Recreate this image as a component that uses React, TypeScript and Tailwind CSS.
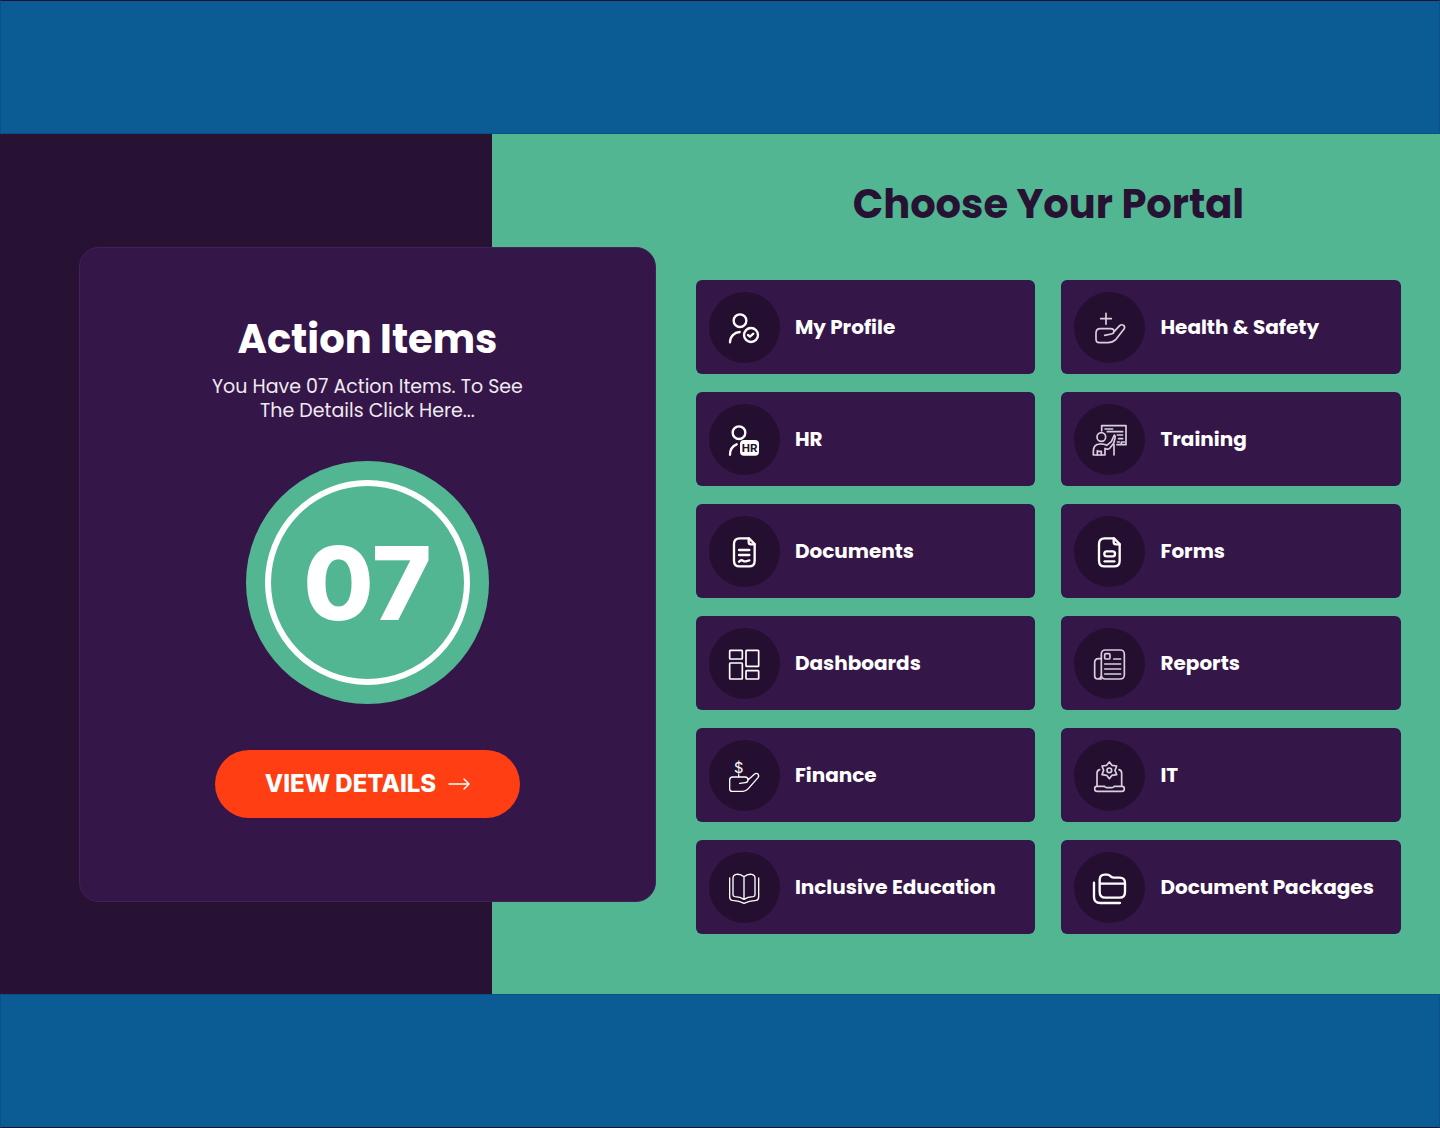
import React from 'react';
import { clsx } from 'clsx';

/**
 * Props shared by every line icon. The icons are drawn on a 105 unit grid.
 */
interface LineIconProps {
  readonly weight: number;
  readonly muted?: boolean;
  readonly children: React.ReactNode;
}

interface Portal {
  readonly label: string;
  readonly icon: React.ReactNode;
}

function LineIcon({ weight, muted = false, children }: LineIconProps) {
  return (
    <svg
      viewBox="0 0 105 105"
      className={clsx('size-[35px]', muted ? 'text-[#d9cfde]' : 'text-white')}
      fill="none"
      stroke="currentColor"
      strokeWidth={weight}
      strokeLinecap="round"
      strokeLinejoin="round"
      aria-hidden="true"
    >
      {children}
    </svg>
  );
}

const sheetOutline = (
  <>
    <path d="M66 13H38Q21 13 21 30V80Q21 97 38 97H66Q83 97 83 80V30Z" />
    <path d="M65 13V24Q65 31 72 31H83" />
  </>
);

const PORTALS: readonly Portal[] = [
  {
    label: 'My Profile',
    icon: (
      <LineIcon weight={7}>
        <circle cx="39" cy="32" r="19" />
        <path d="M9 97C9 80 22 67 38 66" />
        <circle cx="72" cy="75" r="21" />
        <path d="M63 75L69 80L79 71" />
      </LineIcon>
    ),
  },
  {
    label: 'Health & Safety',
    icon: (
      <LineIcon weight={5} muted>
        <path d="M42 10V43M26 26H58" />
        <path d="M67 64L83 47Q89 42 95 46Q100 51 96 57L72 88Q61 98 48 98H22Q12 98 12 88V69Q12 56 25 56H56Q66 56 66 64Q66 71 58 72L38 76" />
      </LineIcon>
    ),
  },
  {
    label: 'HR',
    icon: (
      <LineIcon weight={7}>
        <circle cx="36" cy="32" r="19" />
        <path d="M9 98C9 83 17 72 29 67" />
        <rect x="39" y="54" width="57" height="47" rx="12" fill="currentColor" stroke="none" />
        <text
          x="68"
          y="90"
          textAnchor="middle"
          className="fill-[#250f31] font-['Roboto',sans-serif] font-bold"
          fontSize="35"
          stroke="none"
        >
          HR
        </text>
      </LineIcon>
    ),
  },
  {
    label: 'Training',
    icon: (
      <LineIcon weight={5} muted>
        <path d="M29 27V11H102V68H75" />
        <path d="M39 21H62M46 29H92M76 39H92M80 50H92M76 60H82M88 67V60H97" />
        <circle cx="28" cy="45" r="13" />
        <path d="M4 99V88Q4 66 24 66Q38 66 44 70L58 59L67 39Q71 42 69 49L65 64L53 79Q46 84 39 79V99Z" />
        <path d="M16 99V86M28 99V88M18 88H26M66 67V99" />
      </LineIcon>
    ),
  },
  {
    label: 'Documents',
    icon: (
      <LineIcon weight={7}>
        {sheetOutline}
        <path d="M36 48H67M36 63H67M36 83Q42 76 48 80T60 81L67 79" />
      </LineIcon>
    ),
  },
  {
    label: 'Forms',
    icon: (
      <LineIcon weight={7}>
        {sheetOutline}
        <rect x="37" y="52" width="32" height="15" rx="7" />
        <path d="M38 82H67" />
      </LineIcon>
    ),
  },
  {
    label: 'Dashboards',
    icon: (
      <LineIcon weight={5}>
        <rect x="8" y="13" width="38" height="26" rx="2" />
        <rect x="8" y="51" width="38" height="48" rx="2" />
        <rect x="57" y="13" width="38" height="48" rx="2" />
        <rect x="57" y="74" width="38" height="25" rx="2" />
      </LineIcon>
    ),
  },
  {
    label: 'Reports',
    icon: (
      <LineIcon weight={5} muted>
        <rect x="28" y="12" width="69" height="87" rx="12" />
        <path d="M28 38H20Q8 38 8 50V90Q8 99 17 99T28 90M28 99H17" />
        <rect x="38" y="23" width="16" height="16" rx="4" />
        <path d="M65 39H86M38 54H86M38 69H86M38 84H86" />
      </LineIcon>
    ),
  },
  {
    label: 'Finance',
    icon: (
      <LineIcon weight={4}>
        <text
          x="35"
          y="46"
          textAnchor="middle"
          className="font-['Inter',sans-serif]"
          fontSize="44"
          fill="currentColor"
          stroke="none"
        >
          $
        </text>
        <path d="M35 51V56" />
        <path d="M63 66L82 49Q88 44 93 48Q97 53 93 59L64 92Q57 100 48 100H16Q8 100 8 92V66Q8 57 17 57H54Q63 57 63 66Q63 73 55 74L38 76" />
      </LineIcon>
    ),
  },
  {
    label: 'IT',
    icon: (
      <LineIcon weight={5} muted>
        <path d="M52 12L60 22L74 24L69 37L74 50L60 52L52 62L44 52L30 50L35 37L30 24L44 22Z" />
        <circle cx="52" cy="37" r="7" />
        <path d="M23 35Q15 37 15 46V84M81 35Q89 37 89 46V84" />
        <path d="M38 85H14Q8 85 8 92Q8 100 16 100H89Q97 100 97 92Q97 85 90 85H66Q64 89 60 89H44Q40 89 38 85Z" />
      </LineIcon>
    ),
  },
  {
    label: 'Inclusive Education',
    icon: (
      <LineIcon weight={4}>
        <path d="M51 20Q40 11 28 13Q18 15 18 24V74Q18 79 24 80Q40 81 51 88Q62 81 78 80Q84 79 84 74V24Q84 15 74 13Q62 11 51 20V88" />
        <path d="M8 24V80Q8 90 16 91Q38 93 51 100Q65 93 87 91Q95 90 95 80V24" />
      </LineIcon>
    ),
  },
  {
    label: 'Document Packages',
    icon: (
      <LineIcon weight={7}>
        <path d="M23 30Q23 14 38 14H45Q51 14 56 19Q60 23 67 23H83Q99 23 99 39V66Q99 83 83 83H40Q23 83 23 66Z" />
        <path d="M24 41H98M6 38V80Q6 99 25 99H84" />
      </LineIcon>
    ),
  },
];

/**
 * Single portal tile with a round icon and its label
 */
function PortalCard({ label, icon }: Portal) {
  return (
    <a href="#" className="flex h-[94px] items-center gap-[15px] rounded-md bg-[#351648] pl-[13px] text-white">
      <span className="flex size-[71px] shrink-0 items-center justify-center rounded-full bg-[#250f31]">
        {icon}
      </span>
      <span className="text-xl font-bold whitespace-nowrap">{label}</span>
    </a>
  );
}

/**
 * Summary of the open action items with a link to their details
 */
function ActionItems() {
  return (
    <section className="mt-[69px] flex flex-col items-center rounded-[20px] border border-[#43205a] bg-[#351648] pt-[67px] pb-[83px] text-white">
      <h2 className="text-[40px] leading-12 font-bold">Action Items</h2>
      <p className="mt-3 max-w-[330px] text-center text-[19px] leading-6 text-[#eeeaf0]">
        You Have 07 Action Items. To See The Details Click Here...
      </p>
      <div className="mt-[38px] flex size-[243px] items-center justify-center rounded-full bg-[#52b693]">
        <div className="flex size-[205px] items-center justify-center rounded-full border-6 border-white font-['Inter',sans-serif] text-[102px] leading-none font-extrabold">
          07
        </div>
      </div>
      <button
        type="button"
        className="mt-[46px] flex h-[68px] items-center gap-3 rounded-full bg-[#ff3e13] px-[50px] font-['Inter',sans-serif] text-2xl font-extrabold"
      >
        VIEW DETAILS
        <svg
          viewBox="0 0 22 12"
          className="h-3 w-[22px]"
          fill="none"
          stroke="currentColor"
          strokeWidth="1.5"
          strokeLinecap="round"
          strokeLinejoin="round"
          aria-hidden="true"
        >
          <path d="M1 6H21M16 1L21 6L16 11" />
        </svg>
      </button>
    </section>
  );
}

export default function App() {
  return (
    <div className="flex min-h-screen flex-col font-['Poppins','Inter',sans-serif]">
      <header className="h-[134px] border border-t-[#281233] border-[#0a4f85] bg-[#0b5b94]" />
      <main className="grid flex-1 grid-cols-[9fr_11fr] items-start gap-10 bg-[linear-gradient(to_right,#281233_34.17%,#52b693_34.17%)] pt-11 pr-[39px] pb-[59px] pl-[79px]">
        <ActionItems />
        <section>
          <h1 className="text-center text-[40px] leading-[52px] font-bold text-[#281233]">Choose Your Portal</h1>
          <div className="mt-[50px] grid grid-cols-2 gap-x-[26px] gap-y-[18px]">
            {PORTALS.map(portal => (
              <PortalCard key={portal.label} {...portal} />
            ))}
          </div>
        </section>
      </main>
      <footer className="h-[134px] border border-[#0a4f85] border-b-[#281233] bg-[#0b5b94]" />
    </div>
  );
}
